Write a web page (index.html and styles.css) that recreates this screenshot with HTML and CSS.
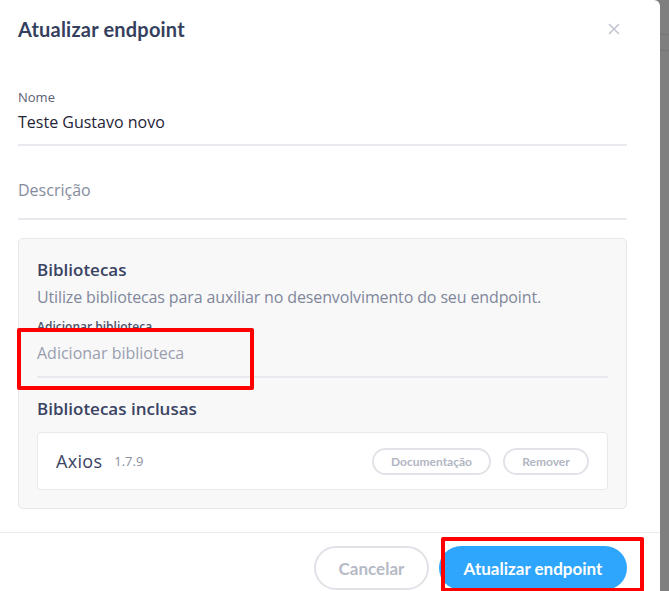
FILE: index.html
```html
<!DOCTYPE html>
<html lang="pt-BR">
<head>
<meta charset="utf-8">
<title>Atualizar endpoint</title>
<link rel="stylesheet" href="styles.css">
</head>
<body>
<div class="screen">
  <div class="modal">
    <header class="modal-header">
      <h2 class="modal-title">Atualizar endpoint</h2>
      <button class="close" aria-label="Fechar">
        <svg width="12" height="12" viewBox="0 0 12 12"><path d="M1 1L11 11M11 1L1 11" stroke="#c3c6d1" stroke-width="1.6" fill="none"/></svg>
      </button>
    </header>
    <div class="modal-body">
      <div class="field field-name">
        <label class="field-label">Nome</label>
        <div class="field-input">Teste Gustavo novo</div>
      </div>
      <div class="field field-desc">
        <div class="field-input placeholder">Descrição</div>
      </div>
      <section class="libs">
        <h3 class="libs-title">Bibliotecas</h3>
        <p class="libs-desc">Utilize bibliotecas para auxiliar no desenvolvimento do seu endpoint.</p>
        <div class="field field-lib">
          <label class="field-label small">Adicionar biblioteca</label>
          <div class="field-input placeholder">Adicionar biblioteca</div>
        </div>
        <h3 class="libs-sub">Bibliotecas inclusas</h3>
        <div class="lib-item">
          <span class="lib-name">Axios</span>
          <span class="lib-ver">1.7.9</span>
          <div class="lib-actions">
            <button class="pill pill-doc">Documentação</button>
            <button class="pill pill-rm">Remover</button>
          </div>
        </div>
      </section>
    </div>
    <footer class="modal-footer">
      <button class="btn btn-cancel">Cancelar</button>
      <button class="btn btn-primary">Atualizar endpoint</button>
    </footer>
  </div>
  <div class="backdrop-strip"></div>
  <div class="annot annot-lib"></div>
  <div class="annot annot-submit"></div>
</div>
</body>
</html>
```

FILE: styles.css
```css
* { box-sizing: border-box; }
html, body { margin: 0; padding: 0; }
body {
  background: #7f7f7f;
  font-family: "Open Sans", "Noto Sans", sans-serif;
  overflow: hidden;
}
.screen {
  position: relative;
  display: flex;
  width: 669px;
  height: 591px;
  overflow: hidden;
}
.modal {
  width: 660px;
  height: 591px;
  background: #ffffff;
  border-top-right-radius: 6px;
  display: flex;
  flex-direction: column;
  flex-shrink: 0;
}
.backdrop-strip {
  flex: 1;
  background:
    linear-gradient(#767676, #767676) 0 34px / 100% 1px no-repeat,
    linear-gradient(#767676, #767676) 0 50px / 100% 1px no-repeat,
    #7f7f7f;
}
.modal-header {
  height: 58px;
  display: flex;
  align-items: center;
  justify-content: space-between;
  padding: 0 40px 0 18px;
}
.modal-title {
  margin: 0;
  font-family: "Lato", sans-serif;
  font-weight: 700;
  font-size: 20px;
  color: #353f5e;
  letter-spacing: 0.2px;
}
.close {
  border: 0;
  background: none;
  padding: 0;
  width: 12px;
  height: 12px;
  display: flex;
}
.modal-body {
  padding: 0 33px 0 18px;
  flex: 1;
}
.field { border-bottom: 2px solid #e9eaef; }
.field-label {
  display: block;
  font-size: 13px;
  line-height: 16px;
  color: #5b6174;
}
.field-input {
  font-size: 16px;
  line-height: 22px;
  color: #1f2436;
}
.placeholder { color: #858b9c; }
.field-name { margin-top: 31px; }
.field-name .field-input { padding: 6px 0 11px; }
.field-desc .field-input { padding: 33px 0 17px; }
.libs {
  margin-top: 18px;
  background: #f8f8f9;
  border: 1px solid #e6e7ec;
  border-radius: 5px;
  padding: 20px 18px 18px 18px;
}
.libs-title, .libs-sub {
  margin: 0;
  font-size: 17px;
  line-height: 22px;
  font-weight: 600;
  color: #3a4362;
}
.libs-desc {
  margin: 5px 0 0;
  font-size: 16px;
  line-height: 22px;
  color: #80879a;
  letter-spacing: -0.13px;
}
.field-lib { margin-top: 11px; }
.field-label.small {
  font-size: 12px;
  font-weight: 600;
  color: #4c5368;
}
.field-lib .field-input { padding: 7px 0 12px; color: #989eae; }
.libs-sub { margin-top: 20px; }
.lib-item {
  margin-top: 12px;
  background: #ffffff;
  border: 1px solid #e8e9ee;
  border-radius: 4px;
  height: 58px;
  display: flex;
  align-items: center;
  padding: 0 18px 0 18px;
}
.lib-name {
  font-size: 18px;
  color: #3a4362;
  letter-spacing: 0.3px;
}
.lib-ver {
  margin-left: 12px;
  font-size: 13px;
  color: #8a8f9e;
}
.lib-actions {
  margin-left: auto;
  display: flex;
  gap: 12px;
}
.pill {
  height: 27px;
  border: 2px solid #e2e3e8;
  background: #ffffff;
  border-radius: 14px;
  font-family: "Lato", sans-serif;
  font-weight: 700;
  font-size: 12px;
  color: #b2b6c3;
}
.pill-doc { width: 119px; }
.pill-rm { width: 86px; }
.modal-footer {
  border-top: 1px solid #e9eaef;
  height: 59px;
  display: flex;
  justify-content: flex-end;
  align-items: flex-start;
  gap: 10px;
  padding: 13px 33px 0 0;
}
.btn {
  height: 44px;
  border-radius: 22px;
  font-family: "Lato", sans-serif;
  font-weight: 700;
  font-size: 17px;
}
.btn-cancel {
  width: 115px;
  background: #ffffff;
  border: 2px solid #e1e2e8;
  color: #b6bac6;
}
.btn-primary {
  width: 188px;
  background: #2fa6fd;
  border: 0;
  color: #ffffff;
}
.annot {
  position: absolute;
  border: 4px solid #ff0000;
  border-radius: 2px;
}
.annot-lib { left: 17px; top: 328px; width: 237px; height: 62px; }
.annot-submit { left: 441px; top: 537px; width: 203px; height: 55px; }
```
